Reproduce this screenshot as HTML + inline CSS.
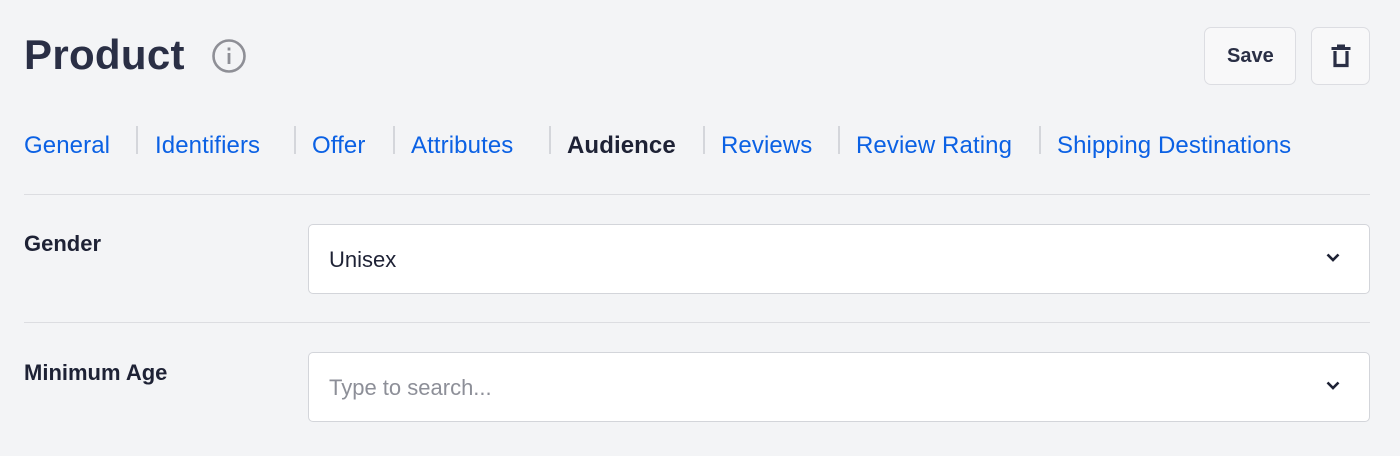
<!DOCTYPE html>
<html><head><style>
body{margin:0;width:1400px;height:456px;background:#f3f4f6;font-family:"Liberation Sans",Arial,sans-serif;position:relative;overflow:hidden}
.a{position:absolute;white-space:nowrap}
.title{left:24px;top:31px;font-size:42px;font-weight:bold;color:#2a2f45;letter-spacing:0.3px}
.tab{top:132px;font-size:24px;color:#0b61e4;letter-spacing:0.1px}
.sep{position:absolute;top:126px;width:2px;height:28px;background:#d4d6db}
.btn{position:absolute;top:27px;height:56px;border:1px solid #dcdde2;border-radius:7px;background:#f8f8f9}
.hr{position:absolute;left:24px;width:1346px;height:1px;background:#dcdde1}
.lbl{font-size:22px;font-weight:bold;color:#1e2235;left:24px}
.box{position:absolute;left:308px;width:1060px;height:68px;border:1px solid #d3d5da;border-radius:5px;background:#fff}
.box span{position:absolute;left:20px;top:22px;font-size:22px}
.box svg{position:absolute;right:29px;top:28px}
</style></head><body>
<div class="a title">Product</div>
<svg class="a" style="left:211px;top:38px" width="36" height="36" viewBox="0 0 36 36"><circle cx="18" cy="18" r="15.5" fill="none" stroke="#8e8f96" stroke-width="2.6"/><rect x="16.6" y="15" width="2.8" height="11" fill="#8e8f96"/><rect x="16.6" y="9.5" width="2.8" height="3" fill="#8e8f96"/></svg>
<div class="btn" style="left:1204px;width:90px"><span class="a" style="left:22px;top:17px;font-size:20px;font-weight:bold;color:#2a2f45">Save</span></div>
<div class="btn" style="left:1311px;width:57px"><svg class="a" style="left:18px;top:16px" width="22" height="24" viewBox="0 0 22 24"><rect x="1.5" y="3" width="19" height="3" fill="#2a2f45"/><rect x="7" y="0.5" width="8" height="3" fill="#2a2f45"/><path d="M5 7v14.5h12V7" fill="none" stroke="#2a2f45" stroke-width="3.2"/></svg></div>
<div class="a tab" style="left:24px">General</div><div class="sep" style="left:136px"></div>
<div class="a tab" style="left:155px">Identifiers</div><div class="sep" style="left:294px"></div>
<div class="a tab" style="left:312px">Offer</div><div class="sep" style="left:393px"></div>
<div class="a tab" style="left:411px">Attributes</div><div class="sep" style="left:549px"></div>
<div class="a tab" style="left:567px;color:#1e2235;font-weight:bold">Audience</div><div class="sep" style="left:703px"></div>
<div class="a tab" style="left:721px">Reviews</div><div class="sep" style="left:838px"></div>
<div class="a tab" style="left:856px">Review Rating</div><div class="sep" style="left:1039px"></div>
<div class="a tab" style="left:1057px">Shipping Destinations</div>
<div class="hr" style="top:194px"></div>
<div class="a lbl" style="top:231px">Gender</div>
<div class="box" style="top:224px"><span style="color:#1e2235">Unisex</span><svg width="14" height="9" viewBox="0 0 14 9"><path d="M1.5 1.5l5.5 5.5 5.5-5.5" fill="none" stroke="#1e2235" stroke-width="2.6"/></svg></div>
<div class="hr" style="top:322px"></div>
<div class="a lbl" style="top:360px">Minimum Age</div>
<div class="box" style="top:352px"><span style="color:#8d8f98">Type to search...</span><svg width="14" height="9" viewBox="0 0 14 9"><path d="M1.5 1.5l5.5 5.5 5.5-5.5" fill="none" stroke="#1e2235" stroke-width="2.6"/></svg></div>
</body></html>
